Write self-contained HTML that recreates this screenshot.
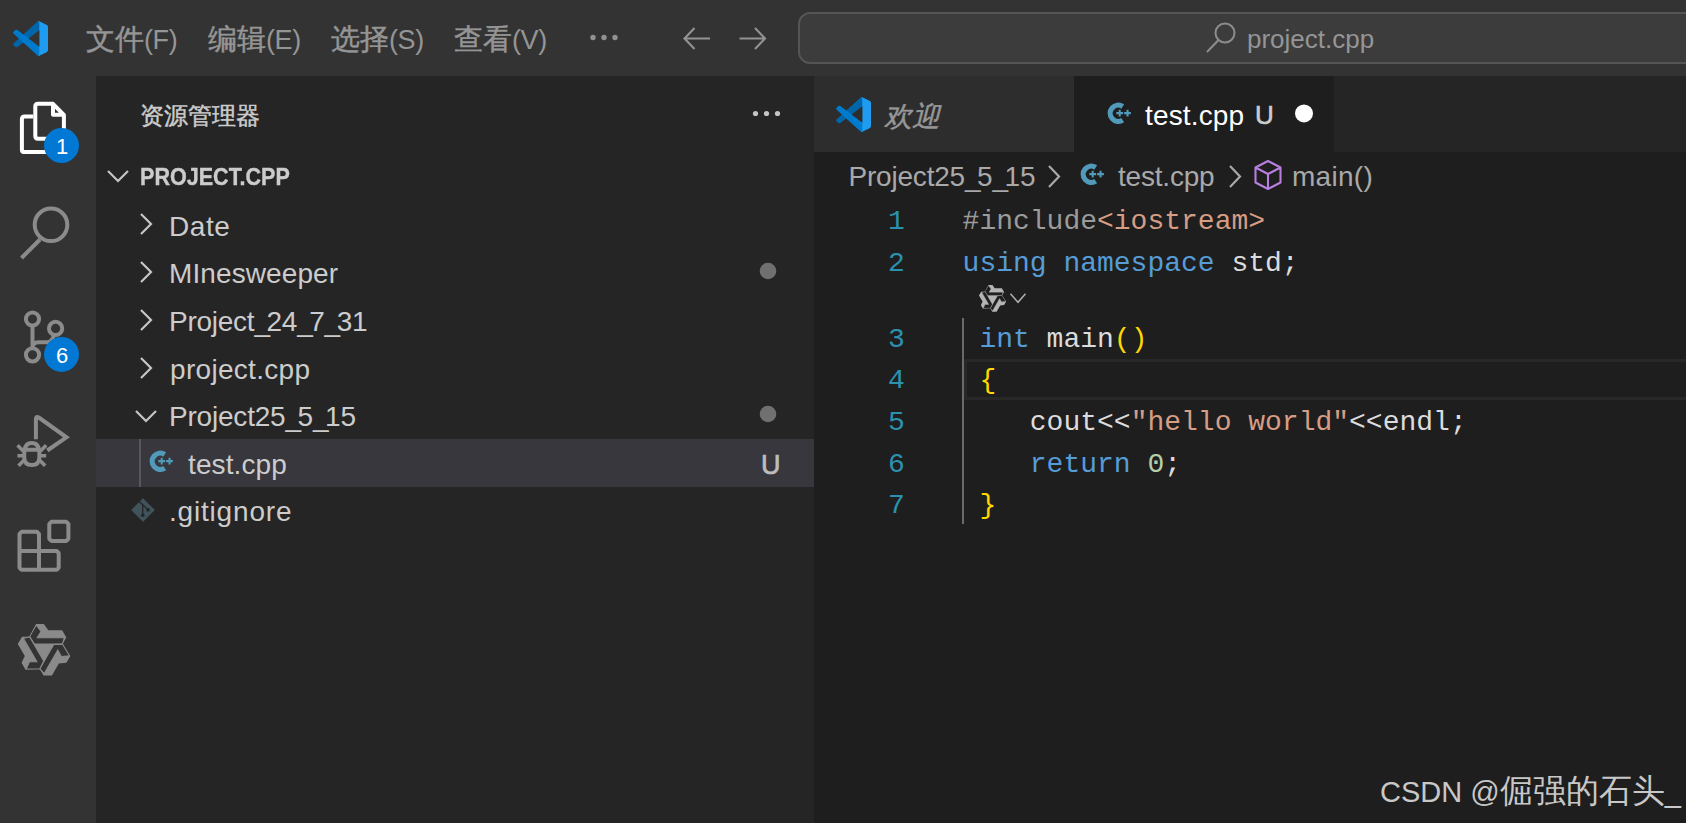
<!DOCTYPE html>
<html><head><meta charset="utf-8">
<style>
*{margin:0;padding:0;box-sizing:border-box}
html,body{width:1686px;height:823px;overflow:hidden;background:#1e1e1e}
body{position:relative;font-family:"Liberation Sans",sans-serif}
.a{position:absolute}
.t{position:absolute;white-space:nowrap;line-height:1}
.m{font-family:"Liberation Mono",monospace;font-size:28px}
u{text-decoration:none;letter-spacing:-3.5px}
i.cj{font-style:inherit;-webkit-text-stroke:0.45px currentColor}
.menu i.cj{font-size:29px;line-height:0;letter-spacing:0}
.mi{letter-spacing:-0.4px;font-size:26px}
#title{left:0;top:0;width:1686px;height:76px;background:#333333}
#act{left:0;top:76px;width:96px;height:747px;background:#333333}
#side{left:96px;top:76px;width:718px;height:747px;background:#252526}
#tabs{left:814px;top:76px;width:872px;height:76px;background:#252526}
.menu{color:#959595;font-size:27px}
.row{color:#cccccc;font-size:28px}
</style></head><body>

<!-- TITLE BAR -->
<div id="title" class="a">
  <svg class="a" style="left:13px;top:21px" width="35" height="35" viewBox="0 0 100 100">
    <mask id="vm" maskUnits="userSpaceOnUse" x="0" y="0" width="100" height="100"><path fill="#fff" fill-rule="evenodd" d="M70.9 99.3c1.6.6 3.4.6 5-.2l20.6-9.9c2.2-1 3.5-3.2 3.5-5.6V16.4c0-2.4-1.4-4.6-3.5-5.6L75.9.9c-2.1-1-4.5-.8-6.4.6-.3.2-.5.4-.7.6L29.4 38 12.2 25c-1.6-1.2-3.8-1.1-5.3.2l-5.5 5c-1.8 1.7-1.8 4.5 0 6.2L16.2 50 1.4 63.6c-1.8 1.7-1.8 4.5 0 6.2l5.5 5c1.5 1.4 3.7 1.5 5.3.2l17.2-13 39.4 36c.6.6 1.4 1.1 2.1 1.4zM75 27.3 45.1 50 75 72.7V27.3z"/></mask>
    <g mask="url(#vm)">
      <path fill="#0065A9" d="M96.5 10.8 75.9.9c-2.4-1.1-5.2-.7-7.1 1.2L1.3 63.6c-1.8 1.7-1.8 4.5 0 6.2l5.5 5c1.5 1.4 3.7 1.5 5.3.2L93.4 13.4c2.7-2.1 6.6-.1 6.6 3.3v-.2c0-2.4-1.4-4.6-3.5-5.7z"/>
      <path fill="#007ACC" d="M96.5 89.2 75.9 99.1c-2.4 1.1-5.2.7-7.1-1.2L1.3 36.4c-1.8-1.7-1.8-4.5 0-6.2l5.5-5c1.5-1.4 3.7-1.5 5.3-.2l81.3 61.6c2.7 2.1 6.6.1 6.6-3.3v.2c0 2.4-1.4 4.6-3.5 5.7z"/>
      <path fill="#1F9CF0" d="M75.9 99.1c-2.4 1.1-5.2.7-7.1-1.2 2.3 2.3 6.2.7 6.2-2.6V4.7c0-3.3-3.9-4.9-6.2-2.6 1.9-1.9 4.7-2.3 7.1-1.2l20.6 9.9c2.2 1 3.5 3.2 3.5 5.6v67.2c0 2.4-1.4 4.6-3.5 5.6L75.9 99.1z"/>
    </g>
  </svg>
  <div class="t menu mi" style="left:86px;top:27px"><i class="cj">文件</i>(F)</div>
  <div class="t menu mi" style="left:208px;top:27px"><i class="cj">编辑</i>(E)</div>
  <div class="t menu mi" style="left:331px;top:27px"><i class="cj">选择</i>(S)</div>
  <div class="t menu mi" style="left:454px;top:27px"><i class="cj">查看</i>(V)</div>
  <svg class="a" style="left:590px;top:34px" width="32" height="8"><circle cx="3" cy="3.5" r="2.7" fill="#919191"/><circle cx="14" cy="3.5" r="2.7" fill="#919191"/><circle cx="25" cy="3.5" r="2.7" fill="#919191"/></svg>
  <svg class="a" style="left:680px;top:24px" width="32" height="28" viewBox="0 0 32 28" fill="none" stroke="#939393" stroke-width="2.1"><path d="M4.5 14.5H30M14.5 4 4.5 14.5 14.5 25"/></svg>
  <svg class="a" style="left:737px;top:24px" width="32" height="28" viewBox="0 0 32 28" fill="none" stroke="#939393" stroke-width="2.1"><path d="M2.5 14.5H28M18 4 28 14.5 18 25"/></svg>
  <div class="a" style="left:798px;top:12px;width:1000px;height:52px;border:2px solid #555555;border-radius:12px;background:#3c3c3c"></div>
  <svg class="a" style="left:1204px;top:21px" width="34" height="34" viewBox="0 0 34 34" fill="none" stroke="#8d8d8d" stroke-width="2"><circle cx="21" cy="12" r="9.5"/><path d="M14.5 19 3 31"/></svg>
  <div class="t menu" style="left:1247px;top:26px;font-size:26px">project.cpp</div>
</div>

<!-- ACTIVITY BAR -->
<div id="act" class="a">
<svg class="a" style="left:0;top:0" width="96" height="747" viewBox="0 76 96 747" fill="none" stroke-linejoin="round">
  <!-- explorer -->
  <g stroke="#ffffff" stroke-width="4">
    <path d="M33.3 116.6H24.6Q21.9 116.6 21.9 119.3V149.4Q21.9 152.1 24.6 152.1H46"/>
    <path d="M53 103.8H38Q35.3 103.8 35.3 106.5V136Q35.3 138.8 38 138.8H48M63.9 135V115L53 103.8V114.7H63.9"/>
  </g>
  <circle cx="61.5" cy="145.5" r="17.5" fill="#0078d4"/>
  <!-- search -->
  <g stroke="#8b8b8b" stroke-width="4">
    <circle cx="51" cy="224.8" r="16.3"/>
    <path d="M40 239.5 21.5 258" stroke-linecap="butt"/>
  </g>
  <!-- source control -->
  <g stroke="#8b8b8b" stroke-width="4">
    <circle cx="32.5" cy="319" r="6.6"/>
    <circle cx="55.6" cy="328.4" r="6.6"/>
    <circle cx="32.5" cy="354.8" r="6.6"/>
    <path d="M32.5 325.6V348.2M32.5 348Q32.5 342.3 38.5 342.3H47Q52 342.3 54 335"/>
  </g>
  <circle cx="61.5" cy="354.4" r="17.5" fill="#0078d4"/>
  <!-- run & debug -->
  <g stroke="#8b8b8b" stroke-width="4">
    <path d="M35.9 439.3V419Q35.9 415.8 38.8 417.5L66.5 437.3L47.3 450.5" stroke-linejoin="miter"/>
    <path d="M24.2 454Q24.2 443 31.8 443Q39.4 443 39.4 454V457Q39.4 465 31.8 465Q24.2 465 24.2 457ZM24.2 449.8H39.4"/>
    <path d="M17.5 445.2 23.5 451.2M18.5 465.8 24 460.3M17.5 455.7H23M46.2 445.2 40.2 451.2M45.2 465.8 39.7 460.3M46.2 455.7H40.7" stroke-width="3.6"/>
  </g>
  <!-- extensions -->
  <g stroke="#8b8b8b" stroke-width="4" stroke-linejoin="bevel">
    <path d="M21.5 531.8H37L39 533.8V551H56.7L58.7 553V567.8L56.7 569.8H21.5L19.5 567.8V533.8Z"/>
    <path d="M19.5 551H39V569.8"/>
    <path d="M51.3 521.8H66.4L68.4 523.8V538.9L66.4 540.9H51.3L49.3 538.9V523.8Z"/>
  </g>
</svg>
<svg class="a" style="left:14px;top:544px" width="60" height="60" viewBox="0 0 823 823">
  <polygon fill="#8a8a8a" points="305,55 410,55 470,140 660,140 718,240 663,332 771,496 719,587 615,596 520,761 405,761 352,667 156,679 104,588 148,494 52,329 110,229 218,230"/>
  <g fill="#333333" stroke="#8a8a8a" stroke-width="14" stroke-linejoin="miter">
    <polygon points="305,68 370,158 318,245 690,245 663,330 280,330 215,228"/>
    <polygon points="305,68 370,158 318,245 690,245 663,330 280,330 215,228" transform="rotate(120 411 410)"/>
    <polygon points="305,68 370,158 318,245 690,245 663,330 280,330 215,228" transform="rotate(240 411 410)"/>
  </g>
</svg>
<div class="t" style="left:56px;top:60px;font-size:22px;color:#fff">1</div>
<div class="t" style="left:56px;top:269px;font-size:22px;color:#fff">6</div>
</div>

<!-- SIDEBAR -->
<div id="side" class="a">
</div>
<div id="sidec" class="a" style="left:0;top:0;width:814px;height:823px">
  <div class="t row" style="left:140px;top:104px;font-size:24px"><i class="cj">资源管理器</i></div>
  <svg class="a" style="left:748px;top:108px" width="36" height="12"><circle cx="7.5" cy="5.5" r="2.6" fill="#c5c5c5"/><circle cx="18.5" cy="5.5" r="2.6" fill="#c5c5c5"/><circle cx="29.5" cy="5.5" r="2.6" fill="#c5c5c5"/></svg>
  <svg class="a" style="left:104px;top:166px" width="28" height="20" fill="none" stroke="#c5c5c5" stroke-width="2.2"><path d="M4 5 14 15 24 5"/></svg>
  <div class="t row" style="left:140px;top:165px;font-size:24.5px;font-weight:bold;transform:scaleX(0.88);transform-origin:0 0;-webkit-text-stroke:0.4px #cccccc">PROJECT.CPP</div>

  <svg class="a" style="left:136px;top:210px" width="20" height="28" fill="none" stroke="#c5c5c5" stroke-width="2.2"><path d="M5 4 15 14 5 24"/></svg>
  <div class="t row" style="left:169px;top:212.5px;letter-spacing:0.57px">Date</div>

  <svg class="a" style="left:136px;top:258px" width="20" height="28" fill="none" stroke="#c5c5c5" stroke-width="2.2"><path d="M5 4 15 14 5 24"/></svg>
  <div class="t row" style="left:169px;top:260.2px;letter-spacing:0.1px">MInesweeper</div>
  <svg class="a" style="left:759px;top:262px" width="18" height="18"><circle cx="9" cy="9" r="8.3" fill="#707070"/></svg>

  <svg class="a" style="left:136px;top:306px" width="20" height="28" fill="none" stroke="#c5c5c5" stroke-width="2.2"><path d="M5 4 15 14 5 24"/></svg>
  <div class="t row" style="left:169px;top:307.8px;letter-spacing:-0.25px">Project<u>_</u>24<u>_</u>7<u>_</u>31</div>

  <svg class="a" style="left:136px;top:354px" width="20" height="28" fill="none" stroke="#c5c5c5" stroke-width="2.2"><path d="M5 4 15 14 5 24"/></svg>
  <div class="t row" style="left:170px;top:355.5px;letter-spacing:0.31px">project.cpp</div>

  <svg class="a" style="left:132px;top:406px" width="28" height="20" fill="none" stroke="#c5c5c5" stroke-width="2.2"><path d="M4 5 14 15 24 5"/></svg>
  <div class="t row" style="left:169px;top:403.1px;letter-spacing:-0.2px">Project25<u>_</u>5<u>_</u>15</div>
  <svg class="a" style="left:759px;top:405px" width="18" height="18"><circle cx="9" cy="9" r="8.3" fill="#707070"/></svg>

  <div class="a" style="left:96px;top:439px;width:718px;height:48px;background:#37373d"></div>
  <div class="a" style="left:139px;top:439px;width:2px;height:48px;background:#585858"></div>
  <svg class="a" style="left:149.4px;top:450px" width="25" height="22" viewBox="0 0 25 22"><path fill="#519aba" d="M17.13 2.33A10.7 10.7 0 1 0 17.13 20.27L14.3 15.91A5.5 5.5 0 1 1 14.3 6.69Z"/><path fill="#519aba" d="M9.3 10.1h6.8v2.1h-6.8zM11.7 7.7h2v6.9h-2zM17.1 10.1h6.8v2.1h-6.8zM19.5 7.7h2.1v6.9h-2.1z"/></svg>
  <div class="t row" style="left:188px;top:450.8px;letter-spacing:0.11px">test.cpp</div>
  <div class="t" style="left:761px;top:452px;font-size:27px;color:#bdbdbd;-webkit-text-stroke:0.7px #bdbdbd">U</div>

  <svg class="a" style="left:131px;top:498px" width="24" height="24" viewBox="0 0 24 24"><path fill="#41535b" stroke="#41535b" stroke-width="1.6" stroke-linejoin="round" d="M12 1.2 22.8 12 12 22.8 1.2 12z"/><g stroke="#252526" stroke-width="1.3" fill="none"><path d="M7 2.2 11.7 6.8V17.2M11.7 6.8 17 11.9"/></g><circle cx="11.7" cy="17.2" r="1.8" fill="#252526"/><circle cx="17" cy="11.9" r="1.8" fill="#252526"/></svg>
  <div class="t row" style="left:169px;top:498.4px;letter-spacing:0.81px">.gitignore</div>
</div>

<!-- EDITOR TABS -->
<div id="tabs" class="a">
  <div class="a" style="left:0;top:0;width:260px;height:76px;background:#2d2d2d"></div>
  <div class="a" style="left:260px;top:0;width:260px;height:76px;background:#1e1e1e"></div>
  <svg class="a" style="left:22px;top:21px" width="35" height="35" viewBox="0 0 100 100">
    <mask id="vm2" maskUnits="userSpaceOnUse" x="0" y="0" width="100" height="100"><path fill="#fff" fill-rule="evenodd" d="M70.9 99.3c1.6.6 3.4.6 5-.2l20.6-9.9c2.2-1 3.5-3.2 3.5-5.6V16.4c0-2.4-1.4-4.6-3.5-5.6L75.9.9c-2.1-1-4.5-.8-6.4.6-.3.2-.5.4-.7.6L29.4 38 12.2 25c-1.6-1.2-3.8-1.1-5.3.2l-5.5 5c-1.8 1.7-1.8 4.5 0 6.2L16.2 50 1.4 63.6c-1.8 1.7-1.8 4.5 0 6.2l5.5 5c1.5 1.4 3.7 1.5 5.3.2l17.2-13 39.4 36c.6.6 1.4 1.1 2.1 1.4zM75 27.3 45.1 50 75 72.7V27.3z"/></mask>
    <g mask="url(#vm2)">
      <path fill="#0065A9" d="M96.5 10.8 75.9.9c-2.4-1.1-5.2-.7-7.1 1.2L1.3 63.6c-1.8 1.7-1.8 4.5 0 6.2l5.5 5c1.5 1.4 3.7 1.5 5.3.2L93.4 13.4c2.7-2.1 6.6-.1 6.6 3.3v-.2c0-2.4-1.4-4.6-3.5-5.7z"/>
      <path fill="#007ACC" d="M96.5 89.2 75.9 99.1c-2.4 1.1-5.2.7-7.1-1.2L1.3 36.4c-1.8-1.7-1.8-4.5 0-6.2l5.5-5c1.5-1.4 3.7-1.5 5.3-.2l81.3 61.6c2.7 2.1 6.6.1 6.6-3.3v.2c0 2.4-1.4 4.6-3.5 5.7z"/>
      <path fill="#1F9CF0" d="M75.9 99.1c-2.4 1.1-5.2.7-7.1-1.2 2.3 2.3 6.2.7 6.2-2.6V4.7c0-3.3-3.9-4.9-6.2-2.6 1.9-1.9 4.7-2.3 7.1-1.2l20.6 9.9c2.2 1 3.5 3.2 3.5 5.6v67.2c0 2.4-1.4 4.6-3.5 5.6L75.9 99.1z"/>
    </g>
  </svg>
  <div class="t" style="left:70px;top:27px;font-size:28px;font-style:italic;color:#969696"><i class="cj">欢迎</i></div>
  <svg class="a" style="left:293px;top:26px" width="25" height="22" viewBox="0 0 25 22"><path fill="#519aba" d="M17.13 2.33A10.7 10.7 0 1 0 17.13 20.27L14.3 15.91A5.5 5.5 0 1 1 14.3 6.69Z"/><path fill="#519aba" d="M9.3 10.1h6.8v2.1h-6.8zM11.7 7.7h2v6.9h-2zM17.1 10.1h6.8v2.1h-6.8zM19.5 7.7h2.1v6.9h-2.1z"/></svg>
  <div class="t" style="left:331px;top:26.1px;font-size:28px;color:#ffffff;letter-spacing:0.16px">test.cpp</div>
  <div class="t" style="left:441px;top:26px;font-size:26px;color:#cccccc;-webkit-text-stroke:0.6px #cccccc">U</div>
  <svg class="a" style="left:480px;top:28px" width="20" height="20"><circle cx="10" cy="9.4" r="9" fill="#ffffff"/></svg>
</div>
<div id="editor" class="a" style="left:814px;top:152px;width:872px;height:671px">
  <div class="t" style="left:34.5px;top:11.3px;font-size:28px;color:#a9a9a9;letter-spacing:-0.2px">Project25<u>_</u>5<u>_</u>15</div>
  <svg class="a" style="left:230px;top:10.5px" width="20" height="28" fill="none" stroke="#a9a9a9" stroke-width="2.2"><path d="M5 3 15 13.5 5 24"/></svg>
  <svg class="a" style="left:265.8px;top:11.3px" width="25" height="22" viewBox="0 0 25 22"><path fill="#519aba" d="M17.13 2.33A10.7 10.7 0 1 0 17.13 20.27L14.3 15.91A5.5 5.5 0 1 1 14.3 6.69Z"/><path fill="#519aba" d="M9.3 10.1h6.8v2.1h-6.8zM11.7 7.7h2v6.9h-2zM17.1 10.1h6.8v2.1h-6.8zM19.5 7.7h2.1v6.9h-2.1z"/></svg>
  <div class="t" style="left:304px;top:11.3px;font-size:28px;color:#a9a9a9;letter-spacing:-0.2px">test.cpp</div>
  <svg class="a" style="left:411px;top:10.5px" width="20" height="28" fill="none" stroke="#a9a9a9" stroke-width="2.2"><path d="M5 3 15 13.5 5 24"/></svg>
  <svg class="a" style="left:439px;top:7px" width="30" height="32" viewBox="0 0 30 32" fill="none" stroke="#b77fe0" stroke-width="2.1" stroke-linejoin="round"><path d="M15 2 27.5 8.5V23.5L15 30 2.5 23.5V8.5Z M2.5 8.5 15 15 27.5 8.5 M15 15V30"/></svg>
  <div class="t" style="left:478px;top:11.3px;font-size:28px;color:#a9a9a9;letter-spacing:0.28px">main()</div>
  <!-- line numbers -->
  <div class="t m" style="left:74px;top:56px;color:#2b91af">1</div>
  <div class="t m" style="left:74px;top:97.5px;color:#2b91af">2</div>
  <div class="t m" style="left:74px;top:173.5px;color:#2b91af">3</div>
  <div class="t m" style="left:74px;top:215.2px;color:#2b91af">4</div>
  <div class="t m" style="left:74px;top:256.9px;color:#2b91af">5</div>
  <div class="t m" style="left:74px;top:298.6px;color:#2b91af">6</div>
  <div class="t m" style="left:74px;top:340.3px;color:#2b91af">7</div>
  <!-- indent guide & current line -->
  <div class="a" style="left:148px;top:165.5px;width:2.4px;height:206px;background:#6a6a6a"></div>
  <div class="a" style="left:150px;top:207px;width:722px;height:41px;border:3.6px solid #282828;border-right:none"></div>
  <!-- code -->
  <div class="t m" style="left:148.6px;top:56px;color:#9b9b9b">#include<span style="color:#d69d85">&lt;iostream&gt;</span></div>
  <div class="t m" style="left:148.6px;top:97.5px;color:#dcdcdc"><span style="color:#569cd6">using namespace</span> std;</div>
  <div class="t m" style="left:165.4px;top:173.5px;color:#dcdcdc"><span style="color:#569cd6">int</span> main<span style="color:#ffd700">()</span></div>
  <div class="t m" style="left:165.4px;top:215.2px;color:#ffd700">{</div>
  <div class="t m" style="left:215.8px;top:256.9px;color:#dcdcdc">cout&lt;&lt;<span style="color:#d69d85">"hello world"</span>&lt;&lt;endl;</div>
  <div class="t m" style="left:215.8px;top:298.6px;color:#569cd6">return <span style="color:#b5cea8">0</span><span style="color:#dcdcdc">;</span></div>
  <div class="t m" style="left:165.4px;top:340.3px;color:#ffd700">}</div>
  <!-- codelens -->
  <svg class="a" style="left:163.1px;top:130.8px" width="31" height="31" viewBox="0 0 823 823">
    <polygon fill="#b4b4b4" points="305,55 410,55 470,140 660,140 718,240 663,332 771,496 719,587 615,596 520,761 405,761 352,667 156,679 104,588 148,494 52,329 110,229 218,230"/>
    <g fill="#1e1e1e" stroke="#b4b4b4" stroke-width="8" stroke-linejoin="miter">
      <polygon points="305,68 370,158 318,245 690,245 663,330 280,330 215,228"/>
      <polygon points="305,68 370,158 318,245 690,245 663,330 280,330 215,228" transform="rotate(120 411 410)"/>
      <polygon points="305,68 370,158 318,245 690,245 663,330 280,330 215,228" transform="rotate(240 411 410)"/>
    </g>
  </svg>
  <svg class="a" style="left:195px;top:140px" width="18" height="12" fill="none" stroke="#b0b0b0" stroke-width="1.5"><path d="M1.5 1.8 9 10.3 16.5 1.8"/></svg>
  <!-- watermark -->
  <div class="t" style="left:566px;top:625.7px;font-size:29px;color:#c8c8c8">CSDN @<span style="font-size:32.5px;line-height:0">倔强的石头</span>_</div>
</div>


</body></html>
